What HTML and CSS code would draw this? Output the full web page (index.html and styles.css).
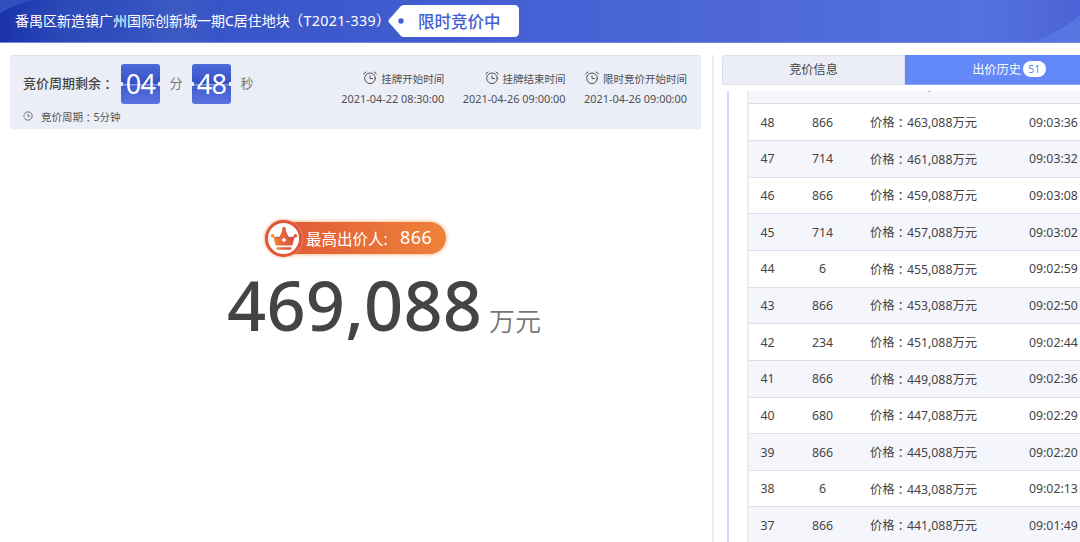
FILE: index.html
```
<!DOCTYPE html>
<html lang="zh-CN">
<head>
    <meta charset="UTF-8">
    <meta name="viewport" content="width=device-width, initial-scale=1.0">
    <title>限时竞价</title>
    <link rel="stylesheet" href="styles.css">
</head>
<body>
    <svg width="0" height="0" class="symbols">
        <symbol id="alarm" viewBox="0 0 14 14">
            <g fill="none" stroke="currentColor" stroke-width="1" stroke-linecap="round">
                <circle cx="7" cy="7.3" r="5.3"/>
                <path d="M7 4.8v2.8h2.6M.8 3Q1.2 1.3 3 1M13.2 3Q12.8 1.3 11 1"/>
            </g>
        </symbol>
    </svg>

    <header class="header">
        <svg class="header-bg" viewBox="0 0 1080 43" preserveAspectRatio="none">
            <defs>
                <linearGradient id="arc">
                    <stop offset="0" stop-color="#4a62d5" stop-opacity="0"/>
                    <stop offset="1" stop-color="#4a62d5"/>
                </linearGradient>
            </defs>
            <path d="M0 0H33Q12 5 0 14Z" fill="#3050c0"/>
            <path d="M1080 0V15Q1062 32 1032 43H980V0Z" fill="url(#arc)"/>
        </svg>
        <h1 class="title">番禺区新造镇广州国际创新城一期C居住地块<span class="code" lang="zh-TW">（T2021-339）</span></h1>
        <div class="tag">
            <svg class="tag-shape" viewBox="0 0 131 32">
                <path d="M15.5 0H126Q131 0 131 5V27Q131 32 126 32H15.5Q14 32 12.5 30.5L1 17.5Q0 16 1 14.5L12.5 1.5Q14 0 15.5 0Z" fill="#fff"/>
                <circle cx="13" cy="16" r="2.7" fill="#4460d2"/>
            </svg>
            <span class="tag-text">限时竞价中</span>
        </div>
    </header>

    <div class="content">
        <main class="left">
            <section class="info">
                <div class="countdown">
                    <div class="timer">
                        <span class="timer-label">竞价周期剩余<i lang="zh-TW">：</i></span>
                        <span class="flip">04</span>
                        <span class="unit">分</span>
                        <span class="flip">48</span>
                        <span class="unit">秒</span>
                    </div>
                    <div class="period">
                        <svg class="history" viewBox="0 0 10 10">
                            <path d="M1.2 3.2A4.2 4.2 0 1 1 1.2 6.8M0 4.3l1.1 1 1.2-1M5 2.7v2.6h2" fill="none" stroke="currentColor" stroke-width=".8"/>
                        </svg>
                        <span>竞价周期<i lang="zh-TW">：</i>5分钟</span>
                    </div>
                </div>
                <div class="times">
                    <div class="time">
                        <div class="time-name"><svg class="alarm"><use href="#alarm"/></svg>挂牌开始时间</div>
                        <div class="time-value">2021-04-22 08:30:00</div>
                    </div>
                    <div class="time">
                        <div class="time-name"><svg class="alarm"><use href="#alarm"/></svg>挂牌结束时间</div>
                        <div class="time-value">2021-04-26 09:00:00</div>
                    </div>
                    <div class="time">
                        <div class="time-name"><svg class="alarm"><use href="#alarm"/></svg>限时竞价开始时间</div>
                        <div class="time-value">2021-04-26 09:00:00</div>
                    </div>
                </div>
            </section>

            <section class="bid">
                <div class="bidder">
                    <span class="crown">
                        <svg viewBox="0 0 28 26">
                            <defs>
                                <linearGradient id="gold" x1="0" x2="1">
                                    <stop offset="0" stop-color="#f08a35"/>
                                    <stop offset=".55" stop-color="#e4603a"/>
                                    <stop offset="1" stop-color="#dc4f3a"/>
                                </linearGradient>
                            </defs>
                            <path d="M3 10L9 12L12.5 4H15.5L19 12L25 10L22.3 19.5H5.7Z" fill="url(#gold)"/>
                            <path d="M6 11L9 12L10 10.5M22 11L19 12L18 10.5" fill="none" stroke="#9d3f6b" stroke-width="1"/>
                            <circle cx="2.6" cy="9.8" r="1.7" fill="#f08a35"/>
                            <circle cx="14" cy="3" r="2" fill="#e4603a"/>
                            <circle cx="25.4" cy="9.8" r="1.7" fill="#dc4f3a"/>
                            <path d="M14 11.2l1 1.8 1.9 1-1.9 1-1 1.8-1-1.8-1.9-1 1.9-1Z" fill="#fff"/>
                            <rect x="6.5" y="21.2" width="15" height="2.6" rx="1" fill="url(#gold)"/>
                        </svg>
                    </span>
                    <span class="bidder-label">最高出价人:</span>
                    <span class="bidder-no">866</span>
                </div>
                <div class="price"><span class="amount">469,088</span><span class="currency">万元</span></div>
            </section>
        </main>

        <aside class="right">
            <div class="tabs">
                <div class="tab">竞价信息</div>
                <div class="tab active">出价历史<span class="badge">51</span></div>
            </div>
            <div class="history-list">
                <div class="rows">
                    <div class="row"><span>49</span><span>714</span><span>价格<i lang="zh-TW">：</i>465,088万元</span><span>09:03:40</span></div>
                    <div class="row"><span>48</span><span>866</span><span>价格<i lang="zh-TW">：</i>463,088万元</span><span>09:03:36</span></div>
                    <div class="row"><span>47</span><span>714</span><span>价格<i lang="zh-TW">：</i>461,088万元</span><span>09:03:32</span></div>
                    <div class="row"><span>46</span><span>866</span><span>价格<i lang="zh-TW">：</i>459,088万元</span><span>09:03:08</span></div>
                    <div class="row"><span>45</span><span>714</span><span>价格<i lang="zh-TW">：</i>457,088万元</span><span>09:03:02</span></div>
                    <div class="row"><span>44</span><span>6</span><span>价格<i lang="zh-TW">：</i>455,088万元</span><span>09:02:59</span></div>
                    <div class="row"><span>43</span><span>866</span><span>价格<i lang="zh-TW">：</i>453,088万元</span><span>09:02:50</span></div>
                    <div class="row"><span>42</span><span>234</span><span>价格<i lang="zh-TW">：</i>451,088万元</span><span>09:02:44</span></div>
                    <div class="row"><span>41</span><span>866</span><span>价格<i lang="zh-TW">：</i>449,088万元</span><span>09:02:36</span></div>
                    <div class="row"><span>40</span><span>680</span><span>价格<i lang="zh-TW">：</i>447,088万元</span><span>09:02:29</span></div>
                    <div class="row"><span>39</span><span>866</span><span>价格<i lang="zh-TW">：</i>445,088万元</span><span>09:02:20</span></div>
                    <div class="row"><span>38</span><span>6</span><span>价格<i lang="zh-TW">：</i>443,088万元</span><span>09:02:13</span></div>
                    <div class="row"><span>37</span><span>866</span><span>价格<i lang="zh-TW">：</i>441,088万元</span><span>09:01:49</span></div>
                </div>
            </div>
        </aside>
    </div>
</body>
</html>
```
FILE: styles.css
```
* {
    margin: 0;
    padding: 0;
    box-sizing: border-box;
}

body {
    height: 542px;
    overflow: hidden;
    display: flex;
    flex-direction: column;
    font-family: "Noto Sans", "Noto Sans CJK SC", sans-serif;
    font-size: 12px;
    color: #444;
    background: #fff;
    white-space: nowrap;
}

/* centred full-width colon */
i {
    font-family: "Noto Sans CJK TC", sans-serif;
    font-style: normal;
    line-height: 1;
    vertical-align: -1px;
}

.symbols {
    position: absolute;
}

/* header */
.header {
    position: relative;
    flex: none;
    height: 43px;
    display: flex;
    align-items: center;
    padding-left: 15px;
    background: linear-gradient(90deg, #1b33ab 0, #2b49b9 60px, #3350c1 130px, #3d5bc2 175px, #3855c8 215px, #4460d2 500px, #4e68d9 750px, #5975e2 1080px);
    border-bottom: 1px solid #7186e0;
}

.header-bg {
    position: absolute;
    left: 0;
    top: 0;
    width: 100%;
    height: 100%;
}

.title {
    position: relative;
    width: 373px;
    font-size: 14px;
    line-height: 42px;
    font-weight: normal;
    color: #fff;
}

.code {
    margin-left: -1px;
    font-family: "Noto Sans", "Noto Sans CJK TC", sans-serif;
    font-size: 14.3px;
    letter-spacing: 0.3px;
}

.tag {
    position: relative;
    flex: none;
    width: 131px;
    height: 32px;
    padding-left: 30px;
}

.tag-shape {
    position: absolute;
    left: 0;
    top: 0;
    width: 131px;
    height: 32px;
}

.tag-text {
    position: relative;
    font-size: 16.5px;
    line-height: 33px;
    font-weight: 500;
    color: #4460d2;
}

/* layout */
.content {
    flex: 1;
    min-height: 0;
    display: flex;
    padding: 12px 0 0 10px;
}

.left {
    width: 704px;
    flex: none;
    border-right: 2px solid #ececf5;
}

.info {
    width: 691px;
    height: 74px;
    display: flex;
    justify-content: space-between;
    padding: 8px 14px 0 13px;
    background: #ebeef6;
    border-top: 1px solid #dcdfeb;
    border-radius: 3px;
}

.timer {
    display: flex;
    align-items: center;
    height: 40px;
}

.timer-label {
    width: 98px;
    margin-top: -4px;
    font-size: 13px;
    font-weight: 500;
}

.flip {
    width: 39px;
    height: 40px;
    border-radius: 3px;
    font-size: 27px;
    line-height: 39px;
    letter-spacing: -0.8px;
    text-align: center;
    color: #fff;
    background:
        radial-gradient(circle at 0 20px, #ebeef6 2px, transparent 2.6px),
        radial-gradient(circle at 39px 20px, #ebeef6 2px, transparent 2.6px),
        linear-gradient(#4f6adb 0, #3350c4 20px, #8b9be3 20px, #8b9be3 21px, #425dd0 22px, #5973e1 40px);
}

.unit {
    width: 32px;
    margin-top: -4px;
    font-size: 13px;
    text-align: center;
    color: #777;
}

.period {
    display: flex;
    align-items: center;
    height: 16px;
    margin-top: 4px;
    font-size: 10.5px;
    color: #555;
}

.history {
    width: 10px;
    height: 10px;
    margin-right: 8px;
}

.times {
    display: flex;
    gap: 18.5px;
    padding-top: 4px;
    font-size: 10.5px;
    color: #505050;
}

.time {
    text-align: right;
}

.time-name {
    display: flex;
    justify-content: flex-end;
    align-items: center;
    height: 20px;
}

.alarm {
    width: 14px;
    height: 14px;
    margin-right: 4px;
}

.time-value {
    line-height: 21px;
    font-size: 10.9px;
}

/* current bid */
.bid {
    padding: 93px 0 0 217px;
}

.bidder {
    position: relative;
    display: flex;
    align-items: center;
    width: 180px;
    height: 32px;
    margin-left: 39px;
    padding-left: 40px;
    border-radius: 16px;
    background: linear-gradient(90deg, #df5738, #ee8239);
    box-shadow: 0 0 4px #f3a56a;
    color: #fff;
}

.crown {
    position: absolute;
    left: -1px;
    top: -2px;
    width: 37px;
    height: 37px;
    display: flex;
    flex: none;
    align-items: center;
    justify-content: center;
    background: #fff;
    border: 3px solid #df5738;
    border-radius: 50%;
    box-shadow: 0 0 3px #f0a080;
}

.crown svg {
    flex: none;
    width: 28px;
    height: 26px;
}

.bidder-label {
    width: 94px;
    font-size: 15.5px;
}

.bidder-no {
    margin-top: -2px;
    font-size: 18px;
    letter-spacing: 0.5px;
}

.price {
    display: flex;
    align-items: baseline;
}

.amount {
    width: 262px;
    font-size: 68.5px;
    line-height: 101px;
    font-weight: 500;
    letter-spacing: 0.2px;
    color: #444;
}

.currency {
    font-size: 26px;
    font-weight: 350;
    color: #777;
}

/* bid history */
.right {
    flex: 1;
    display: flex;
    flex-direction: column;
    padding-left: 8px;
}

.tabs {
    flex: none;
    display: flex;
    height: 30px;
}

.tab {
    width: 183px;
    display: flex;
    align-items: center;
    justify-content: center;
    padding-bottom: 2px;
    font-size: 12.2px;
    background: #ebeef6;
    border: 1px solid #dcdfeb;
    border-radius: 3px 0 0 0;
}

.tab.active {
    flex: 1;
    padding-bottom: 1px;
    padding-left: 25px;
    color: #fff;
    background: #6388f7;
    border: none;
    border-bottom: 1px solid #8ba3fa;
    border-radius: 0;
}

.badge {
    width: 23px;
    height: 16px;
    margin-left: 2px;
    border-radius: 8px;
    font-size: 10.5px;
    line-height: 16px;
    text-align: center;
    color: #6388f7;
    background: #fff;
}

.history-list {
    flex: 1;
    min-height: 0;
    overflow: hidden;
    margin: 6px 0 0 5px;
    padding-left: 18px;
    border-left: 2px solid #cdd6fb;
}

.rows {
    margin-top: -23.4px;
    border-left: 2px solid #ebedf4;
}

.row {
    display: grid;
    grid-template-columns: 37px 73px 158px 60px;
    align-items: center;
    height: 36.66px;
    border-bottom: 1px solid #dcdfeb;
    font-size: 12.3px;
}

.row:nth-child(odd) {
    background: #f5f6fb;
}

.row span:nth-child(-n+2) {
    text-align: center;
}

.row span:nth-child(3) {
    padding-left: 11px;
}

.row span:nth-child(4) {
    padding-left: 12px;
}
```
